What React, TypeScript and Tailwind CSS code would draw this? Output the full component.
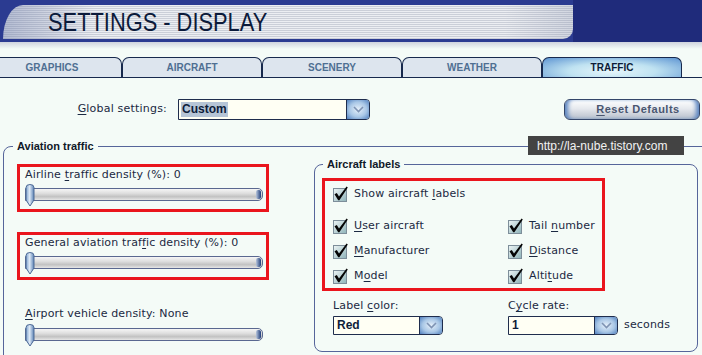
import type { ReactNode } from 'react';

const tabs = ['GRAPHICS', 'AIRCRAFT', 'SCENERY', 'WEATHER', 'TRAFFIC'];

function U({ children }: { children: ReactNode }) {
  return <span className="underline decoration-1 underline-offset-[2px]">{children}</span>;
}

function Thumb() {
  return (
    <svg width="10" height="23" viewBox="0 0 10 23" className="absolute left-0 top-0">
      <defs>
        <linearGradient id="thumbFill" x1="0" y1="0" x2="1" y2="0">
          <stop offset="0" stopColor="#7ea3cf" />
          <stop offset="0.45" stopColor="#dde9f6" />
          <stop offset="1" stopColor="#5b82b4" />
        </linearGradient>
      </defs>
      <path d="M1 3.5 Q1 0.5 5 0.5 Q9 0.5 9 3.5 L9 16 L5 22 L1 16 Z" fill="url(#thumbFill)" stroke="#4d6a96" />
    </svg>
  );
}

function Slider() {
  return (
    <div className="relative h-[22px] w-[238px] pt-[4px]">
      <div className="flex h-[13px] items-center justify-end rounded-r-[5px] border border-[#5a6890] bg-[linear-gradient(180deg,#f6f6f6_0%,#dedede_40%,#c2c2c2_70%,#e6e6e6_100%)] pr-[1px]">
        <div className="h-[9px] w-[5px] rounded-[2px] bg-[linear-gradient(90deg,#b8c6dc,#1f3d7a)]" />
      </div>
      <Thumb />
    </div>
  );
}

function CheckBox() {
  return (
    <svg width="16" height="16" viewBox="0 0 16 16" className="shrink-0">
      <defs>
        <linearGradient id="boxFill" x1="0" y1="0" x2="1" y2="1">
          <stop offset="0" stopColor="#eef6f6" />
          <stop offset="1" stopColor="#8db2b8" />
        </linearGradient>
      </defs>
      <rect x="0.5" y="2.5" width="13" height="13" fill="url(#boxFill)" stroke="#7d8e9a" />
      <path d="M1.5 8.2 L3.8 7 L6 10.6 L13.6 0.4 L14.8 1.4 L6.4 14.2 L5.2 14.2 Z" fill="#050505" />
    </svg>
  );
}

function CheckRow({ children }: { children: ReactNode }) {
  return (
    <div className="flex h-[16px] items-center">
      <CheckBox />
      <span className="ml-[5px] leading-[14px]">{children}</span>
    </div>
  );
}

function Select({ value, className, highlight }: { value: string; className: string; highlight?: boolean }) {
  return (
    <div className={`flex overflow-hidden rounded-r-[4px] border border-[#1f2d4d] bg-[#fffff4] ${className}`}>
      <div className="flex flex-1 items-center pl-[2px]">
        <span
          className={`px-[1px] font-['Liberation_Sans',Arial,sans-serif] text-[12px] font-bold leading-[15px] tracking-normal text-[#0e1d3a] ${
            highlight ? 'bg-[#b6c5d6]' : ''
          }`}
        >
          {value}
        </span>
      </div>
      <div className="flex w-[23px] items-center justify-center border-l border-[#1f2d4d] bg-[radial-gradient(ellipse_at_center,#e6f0fa_0%,#a9c7e6_55%,#4f7fbf_100%)]">
        <svg width="11" height="7" viewBox="0 0 11 7">
          <path d="M1 1 L5.5 5.5 L10 1" fill="none" stroke="#7f93b3" strokeWidth="1.6" />
        </svg>
      </div>
    </div>
  );
}

export default function App() {
  return (
    <div className="relative h-[355px] w-[702px] overflow-hidden bg-[#f4fbf7] font-['DejaVu_Sans',sans-serif] text-[11px] tracking-[0.15px] text-[#1b2942]">
      {/* header */}
      <div className="flex h-[42px] bg-[#2b3b91]">
        <div className="ml-[3px] mt-[5px] flex h-[34px] w-[570px] items-center rounded-tl-[20px_34px] rounded-br-[10px] bg-[linear-gradient(90deg,rgba(110,125,170,0.45)_0%,rgba(255,255,255,0)_16%,rgba(255,255,255,0)_88%,rgba(130,140,170,0.25)_100%),repeating-linear-gradient(180deg,#eceef2_0px,#eceef2_1px,#cbcfd8_1px,#cbcfd8_2px)]">
          <span className="ml-[45px] inline-block origin-left scale-x-[0.84] font-['Liberation_Sans',Arial,sans-serif] text-[26px] leading-none tracking-normal text-[#0b1a3a]">
            SETTINGS - DISPLAY
          </span>
        </div>
        <div className="flex-1 bg-[#1f2b7b]" />
      </div>
      <div className="h-[7px] bg-[linear-gradient(180deg,#cfd4de,#f4fbf7)]" />

      {/* tabs */}
      <div className="pt-[8px]">
        <div className="flex border-b border-[#17294d]">
          <div className="ml-[-18px] flex">
            {tabs.map((t) => {
              const active = t === 'TRAFFIC';
              return (
                <div
                  key={t}
                  className={`flex h-[20px] w-[140px] justify-center rounded-t-[7px] border border-b-0 border-[#17294d] pt-[4px] font-['Liberation_Sans',Arial,sans-serif] text-[10px] font-bold leading-[12px] tracking-normal ${
                    active
                      ? 'bg-[radial-gradient(ellipse_at_50%_70%,#e6f6fb_0%,#bfe2f1_45%,#5d94d2_100%)] text-[#0d1c38]'
                      : 'bg-[#dde5ee] text-[#4f6f92]'
                  }`}
                >
                  {t}
                </div>
              );
            })}
          </div>
        </div>
      </div>

      {/* global settings row */}
      <div className="mt-[21px] flex h-[21px] items-center">
        <div className="w-[167px] text-right tracking-[0.2px]">
          <U>G</U>lobal settings:
        </div>
        <Select value="Custom" highlight className="ml-[11px] h-[21px] w-[192px]" />
        <div className="ml-auto mr-[2px] flex h-[21px] w-[136px] items-center justify-center rounded-[6px] border border-[#34466a] bg-[linear-gradient(180deg,#ffffff_0%,#e6e9ee_45%,#b7bfcb_100%)] pl-[12px] font-['Liberation_Sans',Arial,sans-serif] text-[11px] font-bold tracking-[0.5px] text-[#4a5670] shadow-[inset_5px_0_4px_-2px_#5a84c0,inset_-5px_0_4px_-2px_#5a84c0]">
          <U>R</U>eset Defaults
        </div>
      </div>

      {/* aviation traffic */}
      <fieldset className="ml-[3px] mt-[20px] w-[740px] rounded-tl-[8px] border border-[#56659a] pb-[30px]">
        <legend className="ml-[9px] px-[4px] font-['Liberation_Sans',Arial,sans-serif] text-[11px] font-bold leading-[13px] tracking-normal text-[#101828]">
          Aviation traffic
        </legend>
        <div className="flex items-start">
          <div className="ml-[13px] mt-[11px] w-[252px]">
            <div className="border-[3px] border-[#ea151d] pb-[3px] pl-[5px] pt-[1px]">
              <div className="leading-[14px]">
                Airline <U>t</U>raffic density (%): 0
              </div>
              <div className="mt-[2px]">
                <Slider />
              </div>
            </div>
            <div className="mt-[20px] border-[3px] border-[#ea151d] pb-[3px] pl-[5px] pt-[1px]">
              <div className="leading-[14px]">
                General aviation traf<U>f</U>ic density (%): 0
              </div>
              <div className="mt-[2px]">
                <Slider />
              </div>
            </div>
            <div className="mt-[27px] pl-[8px]">
              <div className="leading-[14px]">
                <U>A</U>irport vehicle density: None
              </div>
              <div className="mt-[3px]">
                <Slider />
              </div>
            </div>
          </div>

          <fieldset className="ml-[45px] mt-[5px] w-[384px] rounded-[8px] border border-[#56659a] pb-[16px]">
            <legend className="ml-[8px] px-[4px] font-['Liberation_Sans',Arial,sans-serif] text-[11px] font-bold leading-[13px] tracking-normal text-[#101828]">
              Aircraft labels
            </legend>
            <div className="ml-[7px] mt-[7px] w-[283px] border-[3px] border-[#ea151d] pb-[4px] pl-[8px] pt-[5px]">
              <CheckRow>
                Show aircraft <U>l</U>abels
              </CheckRow>
              <div className="mt-[16px] grid grid-cols-[175px_auto] gap-y-[9px]">
                <CheckRow>
                  <U>U</U>ser aircraft
                </CheckRow>
                <CheckRow>
                  Tail <U>n</U>umber
                </CheckRow>
                <CheckRow>
                  <U>M</U>anufacturer
                </CheckRow>
                <CheckRow>
                  <U>D</U>istance
                </CheckRow>
                <CheckRow>
                  M<U>o</U>del
                </CheckRow>
                <CheckRow>
                  Alti<U>t</U>ude
                </CheckRow>
              </div>
            </div>
            <div className="ml-[18px] mt-[8px] grid grid-cols-[175px_auto]">
              <div>
                <div className="leading-[14px]">
                  Label <U>c</U>olor:
                </div>
                <Select value="Red" className="mt-[3px] h-[19px] w-[110px]" />
              </div>
              <div>
                <div className="leading-[14px]">
                  C<U>y</U>cle rate:
                </div>
                <div className="mt-[3px] flex items-center">
                  <Select value="1" className="h-[19px] w-[110px]" />
                  <span className="ml-[6px]">seconds</span>
                </div>
              </div>
            </div>
          </fieldset>
        </div>
      </fieldset>

      {/* watermark overlay */}
      <div className="absolute left-[528px] top-[136px] flex h-[19px] w-[156px] items-center bg-[#434343] pl-[9px] font-['Liberation_Sans',Arial,sans-serif] text-[12px] tracking-normal text-[#f2f2f2]">
        http://la-nube.tistory.com
      </div>
    </div>
  );
}
